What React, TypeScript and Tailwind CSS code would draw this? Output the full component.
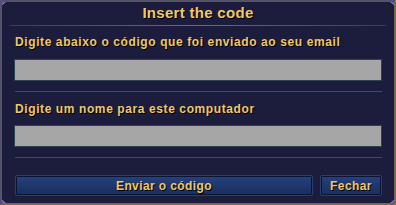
import React from 'react';

const gold = 'text-[#f2c766] [text-shadow:1px_1px_0_#000]';

function Corner({ className }: { className: string }) {
  return (
    <svg width="8" height="7" viewBox="0 0 8 7" className={`absolute ${className}`}>
      <polygon points="0,0 8,0 0,7" fill="#3c5cc8" />
      <line x1="7.5" y1="0" x2="0" y2="6.5" stroke="#b66ac0" strokeWidth="1" />
      <line x1="1" y1="1" x2="4" y2="1" stroke="#8fb0ff" strokeWidth="1" />
    </svg>
  );
}

function Section({ label, pad }: { label: string; pad: string }) {
  return (
    <div className="flex flex-col">
      <div className={`h-[33px] pl-px ${pad} text-[12px] font-bold leading-[16px] tracking-[0.6px] ${gold}`}>
        {label}
      </div>
      <div className="h-[22px] border border-[#2d4450] bg-[#a6a6a6]" />
      <div className="mt-[10px] ml-px h-px bg-[#2b4c96]" />
    </div>
  );
}

function Button({ label, className }: { label: string; className: string }) {
  return (
    <button
      className={`flex h-[21px] items-center justify-center rounded-[2px] border border-[#283d70] bg-gradient-to-b from-[#25417c] to-[#1a2e60] text-[12px] font-bold tracking-[0.4px] shadow-[inset_0_0_0_1px_#0b1434] ${gold} ${className}`}
    >
      {label}
    </button>
  );
}

export default function App() {
  return (
    <div className="relative flex h-[205px] w-[396px] flex-col overflow-hidden border-2 border-t-[#55536a] border-l-[#55536a] border-r-[#7a6648] border-b-[#7a6648] bg-[#1c1d3d] font-['Liberation_Sans',Arial,sans-serif]">
      <div className="flex h-[23px] shrink-0 items-center justify-center">
        <span className={`text-[15px] font-bold tracking-[0.3px] ${gold}`}>Insert the code</span>
      </div>
      <div className="mx-[8px] h-px shrink-0 bg-gradient-to-r from-[#3e3d55] via-[#6c6a7a] to-[#3e3d55]" />

      <div className="flex w-[380px] flex-col pl-[12px]">
        <Section label="Digite abaixo o código que foi enviado ao seu email" pad="pt-[8px]" />
        <Section label="Digite um nome para este computador" pad="pt-[9px]" />

        <div className="mt-[17px] flex gap-[7px] pl-px">
          <Button label="Enviar o código" className="flex-1" />
          <Button label="Fechar" className="w-[62px]" />
        </div>
      </div>

      <Corner className="-left-[2px] -top-[2px]" />
      <Corner className="-right-[2px] -top-[2px] -scale-x-100" />
      <Corner className="-bottom-[2px] -left-[2px] -scale-y-100" />
      <Corner className="-bottom-[2px] -right-[2px] rotate-180" />
    </div>
  );
}
